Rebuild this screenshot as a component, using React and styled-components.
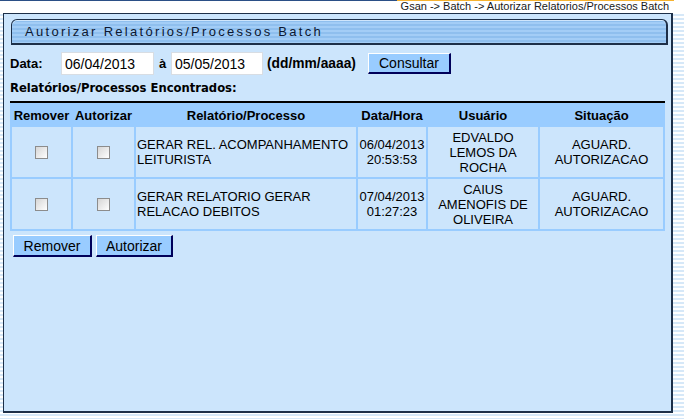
import React from 'react'
import styled, {createGlobalStyle} from 'styled-components'

const color = {
	panel: '#cce5fc',
	line: '#99ccff',
	dark: '#1d2f48',
	navy: '#00005a',
	text: '#000',
}

const GlobalStyle = createGlobalStyle`
	html, body {
		margin: 0;
		padding: 0;
	}
	body {
		font-family: "Liberation Sans", Arial, sans-serif;
		color: ${color.text};
	}
`

/**
 * Whole window, striped background
 */
const Page = styled.div`
	width: 684px;
	height: 419px;
	overflow: hidden;
	background: repeating-linear-gradient(to bottom, #ffffff 0 2px, #d6e8f8 2px 4px);
`

const TopRule = styled.div`
	height: 1px;
	background: linear-gradient(to right, #2b4f86 0 58%, #f5b230 58% 98.6%, transparent 98.6%);
`

const Breadcrumb = styled.div`
	height: 12px;
	font-size: 11px;
	line-height: 10px;
	text-align: right;
	padding-right: 15px;
	color: #1a1a1a;
	background: #fff;
`

const Panel = styled.div`
	box-sizing: border-box;
	width: 670px;
	height: 400px;
	margin-left: 3px;
	background: ${color.panel};
	border: 1px solid ${color.dark};
	border-right-width: 2px;
	border-bottom-width: 2px;
`

const TitleBar = styled.div`
	box-sizing: border-box;
	height: 26px;
	margin: 5px 3px 0 7px;
	padding-left: 13px;
	display: flex;
	align-items: center;
	border: 1px solid ${color.dark};
	border-right-width: 2px;
	border-bottom-width: 2px;
	border-radius: 6px 6px 0 0;
	background: repeating-linear-gradient(to bottom, #8fbfee 0 2px, #a3cdf6 2px 4px);
	box-shadow: inset 0 1px 0 #cfe6fc;
	font-size: 13px;
	letter-spacing: 2.3px;
	color: #0b1730;
`

const Content = styled.div`
	padding-left: 6px;
`

const FilterRow = styled.div`
	display: flex;
	align-items: center;
	height: 23px;
	margin-top: 7px;
`

const Label = styled.span`
	font-weight: bold;
	font-size: ${props => props.size || '13px'};
	width: ${props => props.width || 'auto'};
	margin: ${props => props.margin || '0'};
`

const DateInput = styled.input`
	box-sizing: border-box;
	width: ${props => props.width};
	height: 23px;
	padding: 0 0 0 3px;
	border: 1px solid #d8dde3;
	background: #fff;
	font-family: "Liberation Sans", Arial, sans-serif;
	font-size: 14px;
	color: #000;
	outline: 0;
`

const Sep = styled.span`
	font-weight: bold;
	font-size: 13px;
	width: 17px;
	text-align: center;
`

const Button = styled.button`
	box-sizing: border-box;
	height: ${props => props.height || '22px'};
	width: ${props => props.width};
	padding: 0;
	margin: ${props => props.margin || '0'};
	background: ${color.line};
	border: 1px solid #fff;
	border-right: 2px solid ${color.navy};
	border-bottom: 2px solid ${color.navy};
	font-family: "Liberation Sans", Arial, sans-serif;
	font-size: 14px;
	color: #000;
	cursor: pointer;
`

const SectionTitle = styled.div`
	margin-top: 7px;
	height: 13px;
	font-family: "DejaVu Sans", Verdana, sans-serif;
	font-weight: bold;
	font-size: 11.6px;
	line-height: 13px;
`

const Table = styled.table`
	width: 655px;
	margin-top: 6px;
	table-layout: fixed;
	border-collapse: separate;
	border-spacing: 2px;
	background: ${color.line};
	border-top: 2px solid #000;
`

const Th = styled.th`
	height: 20px;
	padding: 0;
	font-size: 13px;
	font-weight: bold;
	text-align: center;
	background: ${color.line};
	white-space: nowrap;
`

const Td = styled.td`
	height: 50px;
	padding: 0 ${props => props.left ? '0 0 1px' : '0'};
	background: ${color.panel};
	font-size: 13px;
	line-height: 15px;
	text-align: ${props => props.left ? 'left' : 'center'};
	vertical-align: middle;
`

const Check = styled.input.attrs({type: 'checkbox'})`
	appearance: none;
	box-sizing: border-box;
	display: block;
	width: 13px;
	height: 13px;
	margin: 0 auto;
	border: 1px solid #8c8c8c;
	background: linear-gradient(135deg, #d6d6d6 0%, #f2f2f2 70%, #ffffff 100%);
`

const ButtonRow = styled.div`
	display: flex;
	gap: 4px;
	margin: 4px 0 0 3px;
`

const rows = [
	{rel: ['GERAR REL. ACOMPANHAMENTO', 'LEITURISTA'], date: ['06/04/2013', '20:53:53'], user: ['EDVALDO', 'LEMOS DA', 'ROCHA']},
	{rel: ['GERAR RELATORIO GERAR', 'RELACAO DEBITOS'], date: ['07/04/2013', '01:27:23'], user: ['CAIUS', 'AMENOFIS DE', 'OLIVEIRA']},
]

const Lines = ({items}) => items.map((t, i) => <React.Fragment key={i}>{i > 0 && <br/>}{t}</React.Fragment>)

export default function App() {
	return <>
		<GlobalStyle/>
		<Page>
			<TopRule/>
			<Breadcrumb>Gsan -&gt; Batch -&gt; Autorizar Relatorios/Processos Batch</Breadcrumb>
			<Panel>
				<TitleBar>Autorizar Relatórios/Processos Batch</TitleBar>
				<Content>
					<FilterRow>
						<Label width="51px">Data:</Label>
						<DateInput width="93px" defaultValue="06/04/2013"/>
						<Sep>à</Sep>
						<DateInput width="92px" defaultValue="05/05/2013"/>
						<Label size="13.8px" margin="0 12px 0 4px">(dd/mm/aaaa)</Label>
						<Button width="83px" height="21px">Consultar</Button>
					</FilterRow>
					<SectionTitle>Relatórios/Processos Encontrados:</SectionTitle>
					<Table>
						<colgroup>
							<col style={{width: 59}}/>
							<col style={{width: 61}}/>
							<col style={{width: 220}}/>
							<col style={{width: 68}}/>
							<col style={{width: 110}}/>
							<col style={{width: 123}}/>
						</colgroup>
						<thead>
							<tr>
								<Th>Remover</Th>
								<Th>Autorizar</Th>
								<Th>Relatório/Processo</Th>
								<Th>Data/Hora</Th>
								<Th>Usuário</Th>
								<Th>Situação</Th>
							</tr>
						</thead>
						<tbody>
							{rows.map((r, i) => <tr key={i}>
								<Td><Check/></Td>
								<Td><Check/></Td>
								<Td left><Lines items={r.rel}/></Td>
								<Td><Lines items={r.date}/></Td>
								<Td><Lines items={r.user}/></Td>
								<Td>AGUARD.<br/>AUTORIZACAO</Td>
							</tr>)}
						</tbody>
					</Table>
					<ButtonRow>
						<Button width="79px">Remover</Button>
						<Button width="77px">Autorizar</Button>
					</ButtonRow>
				</Content>
			</Panel>
		</Page>
	</>
}
